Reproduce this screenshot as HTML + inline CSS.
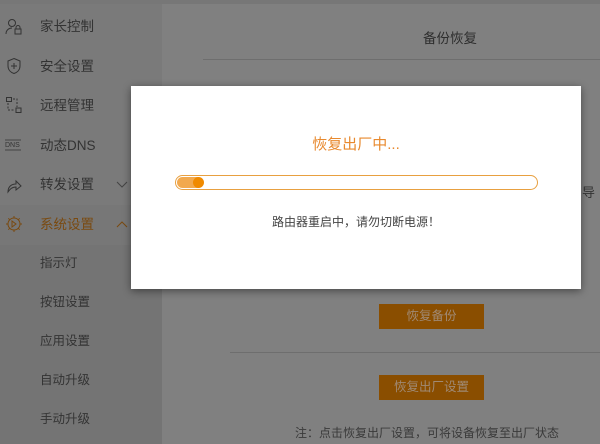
<!DOCTYPE html>
<html><head><meta charset="utf-8"><style>
*{margin:0;padding:0;box-sizing:border-box}
body{width:600px;height:444px;overflow:hidden;background:#808080;position:relative;font-family:"Liberation Sans","Noto Sans CJK SC",sans-serif;}
.top{position:absolute;left:0;top:0;width:600px;height:4px;background:#777}
.side{position:absolute;left:0;top:4px;width:162px;height:440px;background:#7a7a7a}
.sub{position:absolute;left:0;top:245px;width:162px;height:199px;background:#747474}
.act{position:absolute;left:0;top:205px;width:162px;height:40px;background:#777}
.it{position:absolute;left:40px;font-size:13.5px;color:#333;line-height:16px}
.si{position:absolute;left:40px;font-size:12.5px;color:#333;line-height:16px}
.ic{position:absolute;left:5px}
.hd{position:absolute;left:423px;top:27px;font-size:13.5px;color:#2e2e2e}
.ln{position:absolute;height:1px;background:#6e6e6e}
.btn{position:absolute;left:379px;width:105px;height:25px;background:#8a4e00;color:#a08a74;font-size:12.5px;text-align:center;line-height:25px}
.note{position:absolute;left:295px;top:424px;font-size:12px;color:#3a3a3a}
.modal{position:absolute;left:131px;top:86px;width:450px;height:203px;background:#fff;box-shadow:0 2px 8px rgba(0,0,0,.45)}
.t{position:absolute;left:0;width:450px;text-align:center;top:47px;font-size:15px;color:#e8892e}
.bar{position:absolute;left:44px;top:89px;width:363px;height:15px;border:1px solid #e8a040;border-radius:8px}
.fill{position:absolute;left:1px;top:1px;width:26px;height:11px;border-radius:6px;background:#f2a94e}
.dot{position:absolute;left:17px;top:1px;width:11px;height:11px;border-radius:50%;background:#f08a00}
.m{position:absolute;left:0;width:450px;text-align:center;top:127px;font-size:12px;color:#444}
</style></head><body>
<div class="top"></div>
<div class="side"></div>
<div class="act"></div>
<div class="sub"></div>
<svg class="ic" style="top:18px" width="18" height="18" viewBox="0 0 18 18" fill="none" stroke="#333" stroke-width="1"><circle cx="7" cy="5" r="3.5"/><path d="M1 16c0-4 3-6 6-6"/><rect x="10" y="11" width="6" height="5"/><path d="M11 11V9.5a2 2 0 014 0V11"/></svg>
<div class="it" style="top:19px">家长控制</div>
<svg class="ic" style="top:57px" width="18" height="18" viewBox="0 0 18 18" fill="none" stroke="#333" stroke-width="1"><path d="M9 1.5l6 2.5v5c0 4-3 6.5-6 7.5-3-1-6-3.5-6-7.5V4z"/><path d="M9 6v6M6 9h6"/></svg>
<div class="it" style="top:59px">安全设置</div>
<svg class="ic" style="top:96px" width="18" height="18" viewBox="0 0 18 18" fill="none" stroke="#333" stroke-width="1"><rect x="1.5" y="1.5" width="5" height="4"/><rect x="11" y="12" width="5" height="4.5"/><path d="M8 3h4v8M3 7v7h6" stroke-dasharray="2 1.5"/></svg>
<div class="it" style="top:98px">远程管理</div>
<svg class="ic" style="top:138px" width="20" height="14" viewBox="0 0 20 14"><text x="0" y="9" font-size="7" fill="#333" font-family="Liberation Sans">DNS</text><path d="M0 2h16M0 12h16" stroke="#333" stroke-width="0.8"/></svg>
<div class="it" style="top:138px">动态DNS</div>
<svg class="ic" style="top:177px" width="18" height="18" viewBox="0 0 18 18" fill="none" stroke="#333" stroke-width="1"><path d="M3 15c0-5 3-8 8-8V4l5 5-5 4v-3c-4 0-6 2-8 5z"/></svg>
<div class="it" style="top:177px">转发设置</div>
<svg style="position:absolute;left:116px;top:181px" width="12" height="8" viewBox="0 0 12 8" fill="none" stroke="#444" stroke-width="1"><path d="M1 1l5 5 5-5"/></svg>
<svg class="ic" style="top:215px" width="18" height="18" viewBox="0 0 18 18" fill="none" stroke="#7a4a10" stroke-width="1"><circle cx="9" cy="9" r="6"/><path d="M9 1v2M9 15v2M1 9h2M15 9h2M3.3 3.3l1.4 1.4M13.3 13.3l1.4 1.4M3.3 14.7l1.4-1.4M13.3 4.7l1.4-1.4M7 6l4 3-4 3z"/></svg>
<div class="it" style="top:217px;color:#7a4a10">系统设置</div>
<svg style="position:absolute;left:116px;top:220px" width="12" height="8" viewBox="0 0 12 8" fill="none" stroke="#7a4a10" stroke-width="1"><path d="M1 7l5-5 5 5"/></svg>
<div class="si" style="top:255px">指示灯</div>
<div class="si" style="top:294px">按钮设置</div>
<div class="si" style="top:333px">应用设置</div>
<div class="si" style="top:372px">自动升级</div>
<div class="si" style="top:411px">手动升级</div>
<div class="hd">备份恢复</div>
<div class="ln" style="left:203px;top:59px;width:397px"></div>
<div style="position:absolute;left:582px;top:182px;font-size:13px;color:#333">导</div>
<div class="btn" style="top:304px">恢复备份</div>
<div class="ln" style="left:230px;top:352px;width:370px"></div>
<div class="btn" style="top:375px">恢复出厂设置</div>
<div class="note">注：点击恢复出厂设置，可将设备恢复至出厂状态</div>
<div class="modal">
<div class="t">恢复出厂中...</div>
<div class="bar"><div class="fill"></div><div class="dot"></div></div>
<div class="m">路由器重启中，请勿切断电源！</div>
</div>
</body></html>
